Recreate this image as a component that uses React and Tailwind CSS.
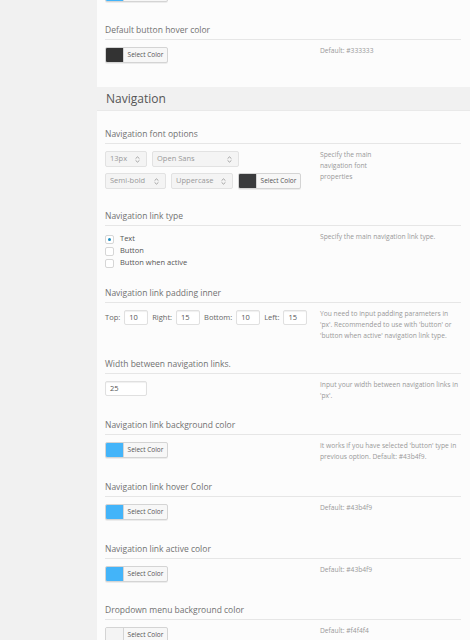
const font = "font-['Open_Sans',sans-serif]"

function ColorBtn({ swatch }) {
  return (
    <div className="flex h-[16px] w-[63px] overflow-hidden rounded-[2px] border border-[#d4d4d4] bg-[#f7f7f7] shadow-[0_1px_0_#ececec]">
      <span className={`w-[18px] border-r border-[#d4d4d4] ${swatch}`} />
      <span className="flex-1 text-center text-[6.5px] leading-[14px] text-[#555]">Select Color</span>
    </div>
  )
}

function Sel({ w, children }) {
  return (
    <div className={`flex h-[16px] ${w} items-center justify-between rounded-[2px] border border-[#e2e2e2] bg-[#f4f4f4] pl-[4px] pr-[6px] text-[7.5px] text-[#999]`}>
      <span>{children}</span>
      <svg width="5" height="7" viewBox="0 0 5 7">
        <path d="M0.6 2.6 L2.5 0.9 L4.4 2.6 M0.6 4.4 L2.5 6.1 L4.4 4.4" stroke="#999" fill="none" strokeWidth="0.9" />
      </svg>
    </div>
  )
}

function Input({ w, value }) {
  return (
    <div className={`h-[15px] ${w} rounded-[2px] border border-[#e0e0e0] bg-white pl-[4px] text-[7.5px] leading-[13px] text-[#555] shadow-[inset_0_1px_1px_#f0f0f0]`}>
      {value}
    </div>
  )
}

function Radio({ checked, label }) {
  return (
    <div className="flex h-[12px] items-center gap-[6px]">
      <span className="flex h-[9px] w-[9px] items-center justify-center rounded-[2px] border border-[#d6d6d6] bg-white">
        {checked && <span className="h-[3px] w-[3px] rounded-full bg-[#1e8cbe]" />}
      </span>
      <span className="text-[7.5px] text-[#555]">{label}</span>
    </div>
  )
}

function Block({ title, desc, pb, children }) {
  return (
    <div className={pb}>
      <div className="border-b border-[#e6e6e6] pb-[3px] text-[8.5px] leading-[12px] text-[#727272]">{title}</div>
      <div className="mt-[7px] grid grid-cols-[215px_1fr] items-start">
        <div>{children}</div>
        <div className="-mt-[2px] w-[138px] text-[6.7px] leading-[11px] text-[#999]">{desc}</div>
      </div>
    </div>
  )
}

export default function App() {
  return (
    <div className={`flex h-[640px] w-[470px] overflow-hidden bg-[#f1f1f1] ${font}`}>
      <div className="w-[97px] shrink-0" />
      <div className="flex-1 bg-[#fcfcfc]">
        <div className="pl-[8px] pr-[9px]">
          <div className="-mt-[14px] pb-[22px]">
            <ColorBtn swatch="bg-[#43b4f9]" />
          </div>
          <Block title="Default button hover color" desc="Default: #333333" pb="pb-[24px]">
            <ColorBtn swatch="bg-[#333333]" />
          </Block>
        </div>

        <div className="h-[24px] border-b border-[#e9e9e9] bg-[#f1f1f1] pl-[9px] text-[12px] leading-[24px] text-[#555]">
          Navigation
        </div>

        <div className="pl-[8px] pr-[9px] pt-[17px]">
          <Block
            title="Navigation font options"
            desc={
              <>
                Specify the main
                <br />
                navigation font
                <br />
                properties
              </>
            }
            pb="pb-[21px]"
          >
            <div className="flex flex-col gap-[6px]">
              <div className="flex gap-[5px]">
                <Sel w="w-[42px]">13px</Sel>
                <Sel w="w-[87px]">Open Sans</Sel>
              </div>
              <div className="flex gap-[5px]">
                <Sel w="w-[61px]">Semi-bold</Sel>
                <Sel w="w-[62px]">Uppercase</Sel>
                <ColorBtn swatch="bg-[#3a3b3d]" />
              </div>
            </div>
          </Block>

          <Block title="Navigation link type" desc="Specify the main navigation link type." pb="pb-[18px]">
            <Radio checked label="Text" />
            <Radio label="Button" />
            <Radio label="Button when active" />
          </Block>

          <Block
            title="Navigation link padding inner"
            desc="You need to input padding parameters in 'px'. Recommended to use with 'button' or 'button when active' navigation link type."
            pb="pb-[17px]"
          >
            <div className="flex items-center gap-[4px] text-[7.5px] text-[#666]">
              <span>Top:</span>
              <Input w="w-[24px]" value="10" />
              <span>Right:</span>
              <Input w="w-[24px]" value="15" />
              <span>Bottom:</span>
              <Input w="w-[24px]" value="10" />
              <span>Left:</span>
              <Input w="w-[24px]" value="15" />
            </div>
          </Block>

          <Block
            title="Width between navigation links."
            desc="Input your width between navigation links in 'px'."
            pb="pb-[18px]"
          >
            <Input w="w-[42px]" value="25" />
          </Block>

          <Block
            title="Navigation link background color"
            desc="It works if you have selected 'button' type in previous option. Default: #43b4f9."
            pb="pb-[19px]"
          >
            <ColorBtn swatch="bg-[#43b4f9]" />
          </Block>

          <Block title="Navigation link hover Color" desc="Default: #43b4f9" pb="pb-[23px]">
            <ColorBtn swatch="bg-[#43b4f9]" />
          </Block>

          <Block title="Navigation link active color" desc="Default: #43b4f9" pb="pb-[22px]">
            <ColorBtn swatch="bg-[#43b4f9]" />
          </Block>

          <Block title="Dropdown menu background color" desc="Default: #f4f4f4" pb="pb-[24px]">
            <ColorBtn swatch="bg-[#f4f4f4]" />
          </Block>
        </div>
      </div>
    </div>
  )
}
